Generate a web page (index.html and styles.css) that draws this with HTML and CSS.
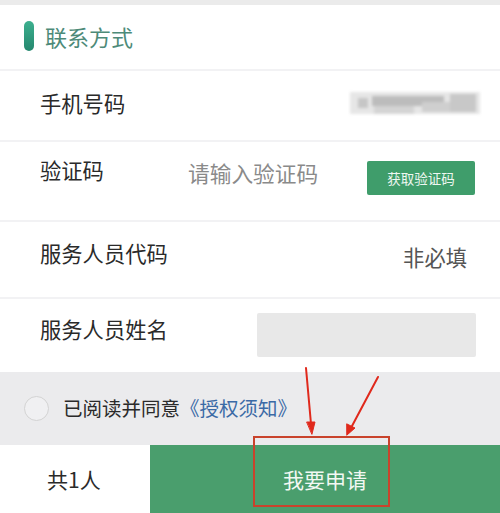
FILE: index.html
```html
<!DOCTYPE html>
<html lang="zh">
<head>
<meta charset="utf-8">
<link rel="stylesheet" href="styles.css">
</head>
<body>
<div class="page">
  <div class="topband"></div>
  <div class="section-head">
    <span class="head-bar"></span>
    <span class="head-title">联系方式</span>
  </div>
  <div class="divider"></div>
  <div class="row row-phone">
    <span class="label">手机号码</span>
    <span class="blur">
      <i class="b0"></i><i class="b1"></i><i class="b2"></i><i class="b3"></i><i class="b4"></i><i class="b5"></i>
    </span>
  </div>
  <div class="divider"></div>
  <div class="row row-code">
    <span class="label">验证码</span>
    <span class="placeholder">请输入验证码</span>
    <button class="code-btn">获取验证码</button>
  </div>
  <div class="divider"></div>
  <div class="row row-staff">
    <span class="label">服务人员代码</span>
    <span class="optional">非必填</span>
  </div>
  <div class="divider"></div>
  <div class="row row-name">
    <span class="label">服务人员姓名</span>
    <span class="name-box"></span>
  </div>
  <div class="agree">
    <span class="radio"></span>
    <span class="agree-text">已阅读并同意<span class="link">《授权须知》</span></span>
  </div>
  <div class="bottom">
    <span class="count">共1人</span>
    <span class="apply">我要申请</span>
  </div>

  <div class="mark-box"></div>
  <svg class="arrows" width="500" height="513" viewBox="0 0 500 513">
    <g stroke="#e0291c" stroke-width="2" fill="#e0291c" stroke-linecap="round">
      <line x1="306" y1="368" x2="311" y2="424"/>
      <polygon points="307,422 315,422 312,434" stroke-width="1"/>
      <line x1="378" y1="377" x2="352" y2="426"/>
      <polygon points="347,424 355,428 347,435" stroke-width="1"/>
    </g>
  </svg>
</div>
</body>
</html>
```
FILE: styles.css
```css
* { box-sizing: border-box; }
html, body { margin: 0; padding: 0; background: #fff; }
body {
  font-family: "Noto Sans CJK SC", "Noto Sans", sans-serif;
  color: #333;
}
.page {
  position: relative;
  width: 500px;
  height: 513px;
  overflow: hidden;
  display: flex;
  flex-direction: column;
}
.topband { height: 5px; background: #ebebeb; }
.section-head {
  height: 64px;
  display: flex;
  align-items: center;
  padding-left: 24px;
  padding-bottom: 2px;
}
.head-bar {
  width: 10px;
  height: 30px;
  border-radius: 5px;
  background: linear-gradient(180deg, #3db08f, #24876e);
}
.head-title {
  margin-left: 11px;
  font-size: 22px;
  color: #4d8a78;
  line-height: 30px;
}
.divider { height: 2px; background: #f2f2f4; }
.row {
  display: flex;
  align-items: flex-start;
  padding-left: 40px;
  padding-right: 24px;
  font-size: 21.3px;
  line-height: 28px;
}
.label { width: 148px; color: #2a2a2a; flex-shrink: 0; }
.row-phone { height: 69px; padding-top: 18px; }
.blur {
  margin-left: auto;
  margin-right: -4px;
  margin-top: 1px;
  width: 130px;
  height: 26px;
  position: relative;
  filter: blur(1.5px);
  display: block;
}
.blur i { position: absolute; display: block; }
.blur .b0 { left: 0; top: 2px; width: 130px; height: 22px; background: #e6e6e6; }
.blur .b1 { left: 8px; top: 8px; width: 10px; height: 10px; background: #c6c6c6; }
.blur .b2 { left: 22px; top: 6px; width: 72px; height: 10px; background: #bcbcbc; }
.blur .b3 { left: 24px; top: 16px; width: 40px; height: 8px; background: #d4d4d4; }
.blur .b4 { left: 72px; top: 12px; width: 42px; height: 10px; background: #cfcfcf; }
.blur .b5 { left: 100px; top: 4px; width: 26px; height: 18px; background: #c8c8c8; }
.row-code { height: 78px; padding-top: 14px; }
.placeholder { color: #8a8a8a; margin-top: 3px; font-size: 21.7px; }
.code-btn {
  margin-left: auto;
  margin-right: 1px;
  margin-top: 5px;
  width: 108px;
  height: 34px;
  border: 0;
  border-radius: 2px;
  background: #3f9d6b;
  color: #eef7f1;
  font-family: inherit;
  font-size: 13.5px;
  padding: 0;
}
.row-staff { height: 75px; padding-top: 17px; }
.optional { margin-left: auto; margin-right: 9px; margin-top: 4px; color: #555; }
.row-name { height: 73px; padding-top: 14px; }
.row-name .label { margin-top: 2px; }
.name-box {
  margin-left: auto;
  width: 219px;
  height: 44px;
  background: #e8e8e8;
  border-radius: 2px;
}
.agree {
  height: 73px;
  background: #ebebed;
  display: flex;
  align-items: center;
  padding-left: 24px;
  padding-bottom: 1px;
}
.radio {
  width: 25px;
  height: 25px;
  border-radius: 50%;
  border: 1.5px solid #d3d3d3;
  background: #f0f0f2;
}
.agree-text { margin-left: 14px; font-size: 19.5px; color: #2a2a2a; line-height: 26px; }
.link { color: #3b6aa6; }
.bottom {
  flex: 1;
  display: flex;
  align-items: stretch;
}
.count {
  width: 150px;
  padding-left: 47px;
  display: flex;
  align-items: center;
  font-size: 21px;
  color: #2a2a2a;
}
.apply {
  flex: 1;
  background: #4a9e6d;
  color: #f2f8f3;
  font-size: 21px;
  display: flex;
  align-items: center;
  justify-content: center;
}
.mark-box {
  position: absolute;
  left: 253px;
  top: 436px;
  width: 137px;
  height: 71px;
  border: 2px solid #c9432c;
}
.arrows { position: absolute; left: 0; top: 0; pointer-events: none; }
```
